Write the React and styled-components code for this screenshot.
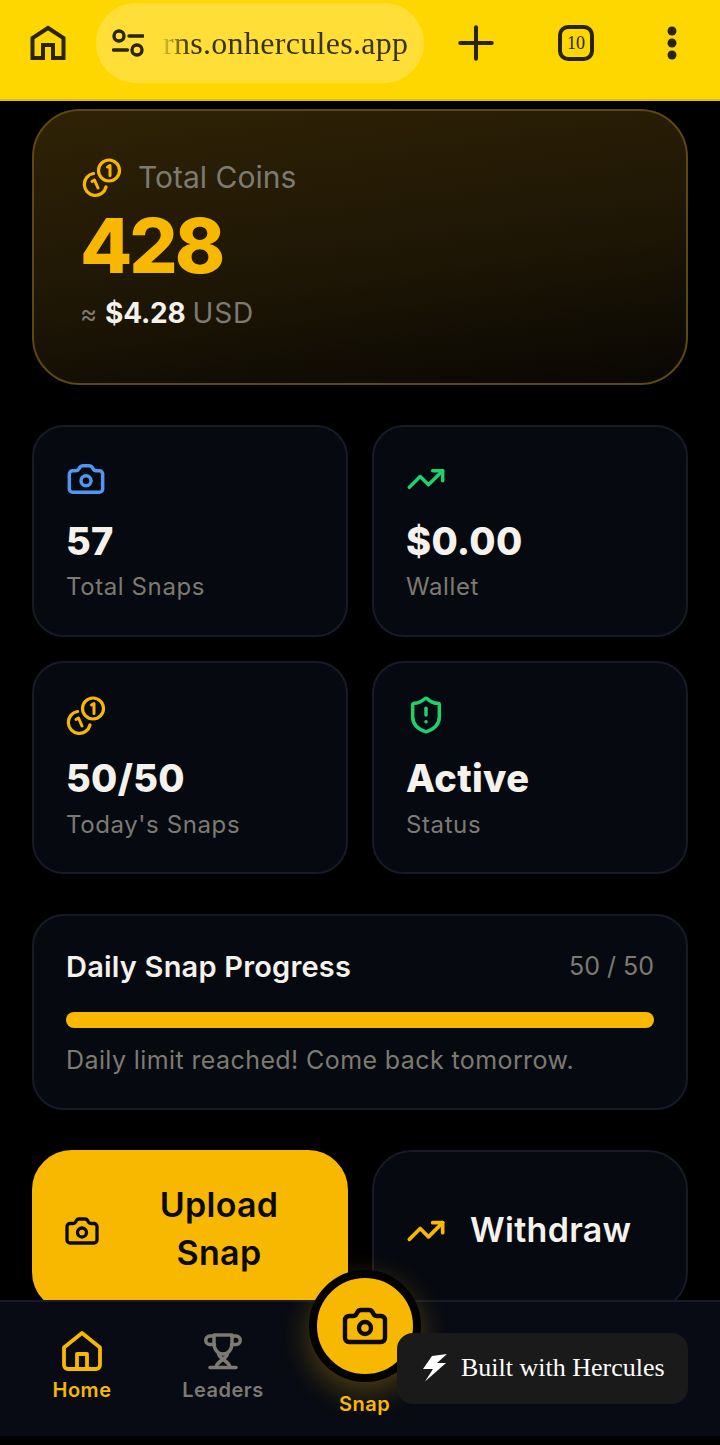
import React from "react";
import styled, { createGlobalStyle } from "styled-components";
import { Camera, TrendingUp, ShieldAlert, Plus } from "lucide-react";

const Global = createGlobalStyle`
  html, body { margin: 0; padding: 0; background: #000; }
  * { box-sizing: border-box; }
`;
const UI = `"Inter", "Noto Sans", sans-serif`;
const GOLD = "#f8b800";
const Screen = styled.div`
  width: 720px; height: 1445px; display: flex; flex-direction: column; background: #000;
  position: relative; overflow: hidden; font-family: ${UI};
`;
const BrowserBar = styled.header`
  height: 101px; flex: none; background: #ffd700; border-bottom: 2px solid #e3c010;
  display: flex; align-items: center; padding: 0 0 13px 30px; color: #2a2406;
`;
const UrlPill = styled.div`
  width: 328px; height: 80px; margin-left: 30px; border-radius: 40px; background: #ffdf37;
  display: flex; align-items: center; padding-left: 16px; gap: 19px; overflow: hidden;
`;
const UrlText = styled.span`
  font: 32px "Liberation Serif", serif; letter-spacing: 0.3px; white-space: nowrap; color: #3a3208;
  -webkit-mask-image: linear-gradient(90deg, rgba(0,0,0,0.15) 0, #000 26px);
  mask-image: linear-gradient(90deg, rgba(0,0,0,0.15) 0, #000 26px);
`;
const BarButton = styled.div`
  display: flex; justify-content: center; align-items: center; margin-left: ${(p) => p.$ml}px;
`;
const TabCount = styled.div`
  width: 36px; height: 36px; border: 4px solid #2a2406; border-radius: 10px;
  display: flex; justify-content: center; align-items: center; font: 18px "Liberation Serif", serif;
`;
const Main = styled.main`
  flex: 1; min-height: 0; overflow: hidden; padding: 8px 32px 0; display: flex; flex-direction: column;
`;
const Hero = styled.section`
  flex: none; height: 276px; border: 2px solid #5e4812; border-radius: 48px; padding: 46px 48px 0;
  background: linear-gradient(172deg, #2f2205 0%, #1e1605 55%, #090703 100%);
`;
const HeroLabel = styled.div`
  display: flex; align-items: center; gap: 16px; height: 40px; font-size: 30px; color: #7d7a72;
`;
const HeroValue = styled.div`
  font-size: 76px; font-weight: 800; line-height: 76px; color: ${GOLD}; letter-spacing: -3px;
  margin: 10px 0 0 -2px;
`;
const HeroUsd = styled.div`
  font-size: 28px; color: #7d7a72; line-height: 40px; margin: 10px 0 0 -2px; display: flex; align-items: baseline; gap: 7px;
  letter-spacing: 0.8px;
  small { font-size: 26px; }
  b { color: #f5f2ec; font-weight: 700; letter-spacing: -0.2px; }
`;
const StatGrid = styled.div`
  display: grid; grid-template-columns: 316px 316px; gap: 24px; margin-top: 40px; flex: none;
`;
const Panel = styled.div`
  background: #060910; border: 2px solid #171b25; border-radius: 32px;
`;
const StatIcon = styled.div`
  height: 40px; display: flex; align-items: center; color: ${(p) => p.$color};
`;
const StatValue = styled.div`
  font-size: 38px; font-weight: 800; line-height: 40px; color: #f5f2ec; margin-top: 22px; letter-spacing: 0.3px;
`;
const StatLabel = styled.div`
  font-size: 24px; line-height: 32px; color: #7d7a72; margin-top: 10px; letter-spacing: 0.6px;
`;
const Stat = styled(Panel)`
  height: 212px; padding: 32px; display: flex; flex-direction: column;
  &:nth-child(n + 3) {
    height: 213px;
    ${StatValue} { margin-top: 23px; }
    ${StatLabel} { margin-top: 11px; }
  }
`;
const Progress = styled(Panel)`
  flex: none; height: 196px; margin-top: 40px; padding: 30px 32px 32px;
`;
const ProgressHead = styled.div`
  display: flex; justify-content: space-between; align-items: center; height: 40px;
`;
const ProgressTitle = styled.div`
  font-size: 29px; font-weight: 600; color: #f5f2ec; letter-spacing: 0.2px;
`;
const ProgressCount = styled.div`
  font-size: 25px; color: #7d7a72;
`;
const Track = styled.div`
  height: 16px; border-radius: 8px; margin-top: 26px; background: ${GOLD};
`;
const ProgressNote = styled.div`
  font-size: 25px; line-height: 32px; color: #7d7a72; margin-top: 16px; letter-spacing: 0.4px;
`;
const Actions = styled.div`
  display: grid; grid-template-columns: 316px 316px; gap: 24px; margin-top: 40px; flex: none;
`;
const ActionButton = styled.div`
  height: 162px; border-radius: 40px; display: flex; align-items: center; gap: 24px;
  padding: 0 32px 0 ${(p) => (p.$primary ? 30 : 32)}px;
  font-size: 34px; font-weight: 600; line-height: 48px; letter-spacing: 0.3px;
  background: ${(p) => (p.$primary ? GOLD : "#060910")};
  border: 2px solid ${(p) => (p.$primary ? GOLD : "#171b25")};
  color: ${(p) => (p.$primary ? "#0a0a0a" : "#f5f2ec")};
`;
const ActionText = styled.span`
  flex: 1; padding-bottom: ${(p) => p.$pb}px; text-align: ${(p) => p.$align};
`;
const BottomNav = styled.nav`
  flex: none; height: 136px; margin-bottom: 9px; background: #080b13; border-top: 2px solid #171b25;
  display: flex; padding-left: 32px; position: relative;
`;
const NavItem = styled.div`
  width: ${(p) => p.$w}px; height: 100%; display: flex; flex-direction: column; align-items: center; padding-top: 25px;
  color: ${(p) => p.$color}; font-size: 20px; font-weight: 600; letter-spacing: 0.5px;
  span { margin-top: 1px; line-height: 28px; }
`;
const NavIcon = styled.div`
  height: 48px; display: flex; align-items: center; justify-content: center;
`;
const SnapFab = styled.div`
  position: absolute; left: 309px; top: -32px; width: 112px; height: 112px; border-radius: 50%;
  background: ${GOLD}; border: 8px solid #000; color: #0a0a0a;
  display: flex; align-items: center; justify-content: center;
  box-shadow: 0 10px 30px rgba(246, 184, 0, 0.3);
`;
const SnapLabel = styled.span`
  position: absolute; left: 339px; top: 88px; font-size: 20px; font-weight: 600; color: ${GOLD}; line-height: 28px; letter-spacing: 0.5px;
`;
const Badge = styled.div`
  position: absolute; right: 32px; top: 31px; width: 291px; height: 71px; border-radius: 16px; background: #1a1a1a;
  display: flex; align-items: center; gap: 14px; padding: 0 0 2px 26px; color: #fff;
  font: 26px "Liberation Serif", serif;
`;

const CoinsIcon = () => (
  <svg width="40" height="40" viewBox="0 1.500 40 40" fill="none" stroke={GOLD} strokeWidth="3.200" strokeLinecap="round" strokeLinejoin="round">
    <circle cx="27" cy="15" r="10.500" />
    <path d="M25.500 11.500l2.500-1.500v10" strokeWidth="3" />
    <path d="M24 31.500A11 11 0 1 1 11.500 18" />
    <path d="M10 26l2.500-1.500 3.500 8" strokeWidth="3" />
  </svg>
);
const HomeIcon = () => (
  <svg width="48" height="48" viewBox="0 0 24 24" fill="none" stroke={GOLD} strokeWidth="1.900" strokeLinejoin="round" strokeLinecap="round">
    <path d="M3 10.200 12 3l9 7.200V19a2 2 0 0 1-2 2H5a2 2 0 0 1-2-2z" />
    <path d="M9.500 21v-7.500h5V21" />
  </svg>
);
const BarHome = () => (
  <svg width="36" height="36" viewBox="0 0 36 36" fill="none" stroke="#2a2406" strokeWidth="4" strokeLinejoin="miter">
    <path d="M2.500 33V13L18 3l15.500 10v20H23V20H13v13z" />
  </svg>
);
const TuneIcon = () => (
  <svg width="32" height="32" viewBox="0 0 32 32" fill="none" stroke="#2a2406" strokeWidth="3.400" strokeLinecap="round">
    <circle cx="7" cy="9" r="5" /><path d="M17 9h14" /><path d="M1.500 23h14" /><circle cx="25" cy="23" r="5" />
  </svg>
);
const MenuDots = () => (
  <svg width="36" height="36" viewBox="0 0 36 36" fill="#2a2406">
    <circle cx="18" cy="6" r="4.500" /><circle cx="18" cy="18" r="4.500" /><circle cx="18" cy="30" r="4.500" />
  </svg>
);
const TrophyIcon = () => (
  <svg width="38" height="38" viewBox="0 0 38 38" fill="none" stroke="#7d7a72" strokeWidth="3.500" strokeLinecap="round" strokeLinejoin="round">
    <path d="M10 3h18v8c0 7-4 11-9 11s-9-4-9-11z" />
    <path d="M10 4H6a4 4 0 0 0 0 8.500h4.500M28 4h4a4 4 0 0 1 0 8.500h-4.500" />
    <path d="M14.500 21.500C15 27 25 29 26 35M23.500 21.500C23 27 13 29 12 35" />
    <path d="M6 35.500h26" />
  </svg>
);
const BoltIcon = () => (
  <svg width="24" height="28" viewBox="0 0 24 28" fill="#fff">
    <path d="M24 0 9 2 0 15h10L2 27.500 23 9H14z" />
  </svg>
);

export default function App() {
  return (
    <Screen>
      <Global />
      <BrowserBar>
        <BarHome />
        <UrlPill>
          <TuneIcon />
          <UrlText>rns.onhercules.app</UrlText>
        </UrlPill>
        <BarButton $ml={25}><Plus size={54} strokeWidth={1.8} /></BarButton>
        <BarButton $ml={55}><TabCount>10</TabCount></BarButton>
        <BarButton $ml={60}><MenuDots /></BarButton>
      </BrowserBar>
      <Main>
        <Hero>
          <HeroLabel><CoinsIcon />Total Coins</HeroLabel>
          <HeroValue>428</HeroValue>
          <HeroUsd><small>≈</small><b>$4.28</b>USD</HeroUsd>
        </Hero>
        <StatGrid>
          <Stat>
            <StatIcon $color="#4f97f0"><Camera size={40} strokeWidth={2.1} /></StatIcon>
            <StatValue>57</StatValue>
            <StatLabel>Total Snaps</StatLabel>
          </Stat>
          <Stat>
            <StatIcon $color="#1fd16c"><TrendingUp size={40} strokeWidth={2.1} /></StatIcon>
            <StatValue>$0.00</StatValue>
            <StatLabel>Wallet</StatLabel>
          </Stat>
          <Stat>
            <StatIcon $color={GOLD}><CoinsIcon /></StatIcon>
            <StatValue>50/50</StatValue>
            <StatLabel>Today's Snaps</StatLabel>
          </Stat>
          <Stat>
            <StatIcon $color="#1fd16c"><ShieldAlert size={40} strokeWidth={2.1} /></StatIcon>
            <StatValue>Active</StatValue>
            <StatLabel>Status</StatLabel>
          </Stat>
        </StatGrid>
        <Progress>
          <ProgressHead>
            <ProgressTitle>Daily Snap Progress</ProgressTitle>
            <ProgressCount>50 / 50</ProgressCount>
          </ProgressHead>
          <Track />
          <ProgressNote>Daily limit reached! Come back tomorrow.</ProgressNote>
        </Progress>
        <Actions>
          <ActionButton $primary>
            <Camera size={36} strokeWidth={2.2} />
            <ActionText $pb={4} $align="center">Upload Snap</ActionText>
          </ActionButton>
          <ActionButton>
            <TrendingUp size={40} color={GOLD} strokeWidth={2.2} />
            <ActionText $pb={2} $align="left">Withdraw</ActionText>
          </ActionButton>
        </Actions>
      </Main>
      <BottomNav>
        <NavItem $w={100} $color={GOLD}>
          <NavIcon><HomeIcon /></NavIcon>
          <span>Home</span>
        </NavItem>
        <NavItem $w={182} $color="#7d7a72">
          <NavIcon><TrophyIcon /></NavIcon>
          <span>Leaders</span>
        </NavItem>
        <SnapFab><Camera size={48} strokeWidth={2.2} /></SnapFab>
        <SnapLabel>Snap</SnapLabel>
        <Badge><BoltIcon />Built with Hercules</Badge>
      </BottomNav>
    </Screen>
  );
}
